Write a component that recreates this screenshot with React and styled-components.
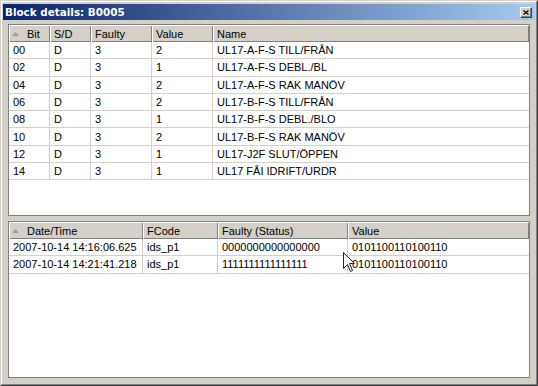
import React from 'react';
import styled, { createGlobalStyle } from 'styled-components';

const Global = createGlobalStyle`
  html, body { margin: 0; padding: 0; background: #D4D0C8; }
  body {
    width: 538px; height: 386px; overflow: hidden;
    font-family: "Liberation Sans", Arial, sans-serif; font-size: 11px; color: #000;
  }
`;

const Frame = styled.div`
  box-sizing: border-box;
  width: 538px;
  height: 386px;
  background: #D4D0C8;
  border: 1px solid;
  border-color: #D4D0C8 #404040 #404040 #D4D0C8;
`;

const Inner = styled.div`
  box-sizing: border-box;
  height: 100%;
  border: 1px solid;
  border-color: #fff #808080 #808080 #fff;
  padding: 1px;
  display: flex;
  flex-direction: column;
`;

const TitleBar = styled.div`
  margin-top: 1px;
  height: 16px;
  flex: none;
  display: flex;
  align-items: center;
  justify-content: space-between;
  padding: 0 3px 0 2px;
  background: linear-gradient(to right, #0A246A, #A6CAF0);
`;

const Title = styled.span`
  font-family: "DejaVu Sans", Verdana, sans-serif;
  font-weight: bold;
  font-size: 10.4px;
  color: #fff;
  white-space: nowrap;
`;

const CloseBtn = styled.div`
  box-sizing: border-box;
  width: 12px;
  height: 11px;
  background: #D4D0C8;
  border: 1px solid;
  border-color: #fff #404040 #404040 #fff;
  box-shadow: inset -1px -1px #808080;
  display: flex;
  align-items: center;
  justify-content: center;
`;

const Body = styled.div`
  flex: 1;
  display: flex;
  flex-direction: column;
  gap: 5px;
  padding: 4px 5px 5px 5px;
  min-height: 0;
`;

const ListBox = styled.div`
  position: relative;
  box-sizing: border-box;
  flex: ${p => (p.$grow ? '1' : 'none')};
  height: ${p => (p.$grow ? 'auto' : `${p.$h}px`)};
  border: 1px solid #808080;
  background: #fff;
  overflow: hidden;
`;

const Grid = styled.div`
  display: grid;
  grid-template-columns: ${p => p.$cols};
`;

const HeadCell = styled.div`
  box-sizing: border-box;
  height: 17px;
  background: #D4D0C8;
  display: flex;
  align-items: center;
  gap: 8px;
  padding-left: ${p => (p.$sorted ? '3px' : '4px')};
  box-shadow: inset 1px 1px #fff, inset -1px -1px #808080;
  white-space: nowrap;
  overflow: hidden;
`;

const Cell = styled.div`
  box-sizing: border-box;
  height: 17.3px;
  display: flex;
  align-items: center;
  padding-left: 4px;
  border-bottom: 1px solid #D4D0C8;
  border-right: ${p => (p.$last ? 'none' : '1px solid #D4D0C8')};
  white-space: nowrap;
  overflow: hidden;
`;

const Cursor = styled.svg`
  position: absolute;
  left: 334px;
  top: 30px;
  pointer-events: none;
`;

const SortArrow = () => (
  <svg width="7" height="4" viewBox="0 0 7 4">
    <polygon points="0,4 3.5,0 7,4" fill="#A0A0A0" />
  </svg>
);

const ListView = ({ cols, headers, rows, h, grow, children }) => (
  <ListBox $h={h} $grow={grow}>
    <Grid $cols={cols}>
      {headers.map((hd, i) => (
        <HeadCell key={hd} $sorted={i === 0}>
          {i === 0 && <SortArrow />}
          {hd}
        </HeadCell>
      ))}
      {rows.map((r, ri) =>
        r.map((c, ci) => (
          <Cell key={`${ri}-${ci}`} $last={ci === r.length - 1}>
            {c}
          </Cell>
        ))
      )}
    </Grid>
    {children}
  </ListBox>
);

const bits = [
  ['00', 'D', '3', '2', 'UL17-A-F-S TILL/FRÅN'],
  ['02', 'D', '3', '1', 'UL17-A-F-S DEBL./BL'],
  ['04', 'D', '3', '2', 'UL17-A-F-S RAK MANÖV'],
  ['06', 'D', '3', '2', 'UL17-B-F-S TILL/FRÅN'],
  ['08', 'D', '3', '1', 'UL17-B-F-S DEBL./BLO'],
  ['10', 'D', '3', '2', 'UL17-B-F-S RAK MANÖV'],
  ['12', 'D', '3', '1', 'UL17-J2F SLUT/ÖPPEN'],
  ['14', 'D', '3', '1', 'UL17 FÅI IDRIFT/URDR'],
];

const events = [
  ['2007-10-14 14:16:06.625', 'ids_p1', '0000000000000000', '0101100110100110'],
  ['2007-10-14 14:21:41.218', 'ids_p1', '1111111111111111', '0101100110100110'],
];

export default function App() {
  return (
    <>
      <Global />
      <Frame>
        <Inner>
          <TitleBar>
            <Title>Block details: B0005</Title>
            <CloseBtn>
              <svg width="6" height="5" viewBox="0 0 6 5">
                <path d="M0.5 0.5 L5.5 4.5 M5.5 0.5 L0.5 4.5" stroke="#000" strokeWidth="1.2" />
              </svg>
            </CloseBtn>
          </TitleBar>
          <Body>
            <ListView
              h={192}
              cols="41px 41px 61px 61px 1fr"
              headers={['Bit', 'S/D', 'Faulty', 'Value', 'Name']}
              rows={bits}
            />
            <ListView
              grow
              cols="134px 75px 130px 1fr"
              headers={['Date/Time', 'FCode', 'Faulty (Status)', 'Value']}
              rows={events}
            >
              <Cursor width="13" height="21" viewBox="0 0 13 21">
                <path
                  d="M0.5 0.5 L0.5 16.5 L4.5 12.5 L7.5 19.5 L9.5 18.5 L6.5 11.5 L11.5 11.5 Z"
                  fill="#fff"
                  stroke="#222"
                  strokeWidth="1"
                  strokeLinejoin="miter"
                />
              </Cursor>
            </ListView>
          </Body>
        </Inner>
      </Frame>
    </>
  );
}
